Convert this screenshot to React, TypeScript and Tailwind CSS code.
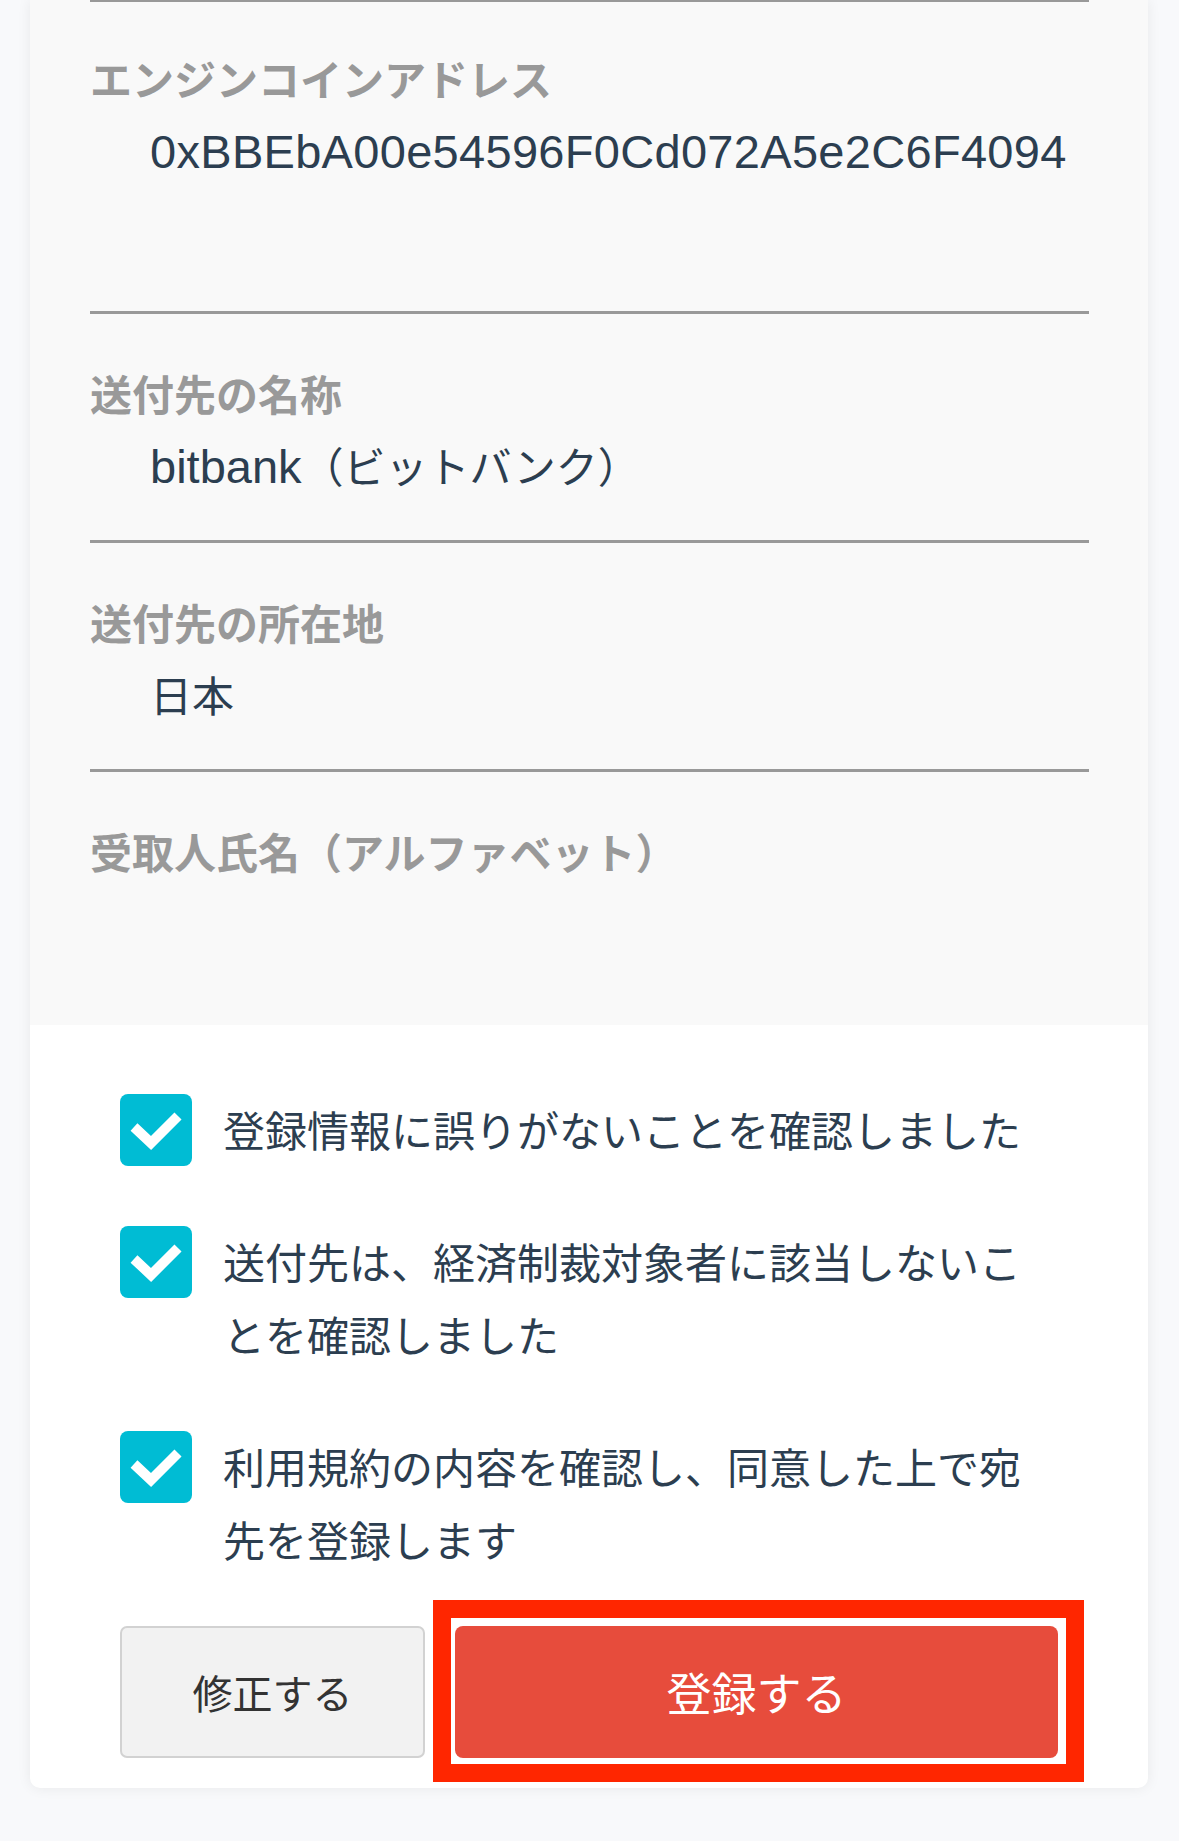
import React from 'react';

interface Field {
  label: string;
  value?: React.ReactNode;
  padTop: string;
  padBottom: string;
}

const fields: Field[] = [
  {
    label: 'エンジンコインアドレス',
    value: (
      <span className="font-['Liberation_Sans',sans-serif] text-[47px] leading-[60px] tracking-[0.3px]">
        0xBBEbA00e54596F0Cd072A5e2C6F4094
      </span>
    ),
    padTop: 'pt-[46px]',
    padBottom: 'pb-[131px]',
  },
  {
    label: '送付先の名称',
    value: (
      <>
        <span className="font-['Liberation_Sans',sans-serif] text-[47px] leading-[60px]">bitbank</span>
        （ビットバンク）
      </>
    ),
    padTop: 'pt-[49px]',
    padBottom: 'pb-[45px]',
  },
  { label: '送付先の所在地', value: '日本', padTop: 'pt-[49px]', padBottom: 'pb-[45px]' },
  { label: '受取人氏名（アルファベット）', padTop: 'pt-[49px]', padBottom: 'pb-[144px]' },
];

const checks = [
  '登録情報に誤りがないことを確認しました',
  '送付先は、経済制裁対象者に該当しないことを確認しました',
  '利用規約の内容を確認し、同意した上で宛先を登録します',
];

function CheckBox() {
  return (
    <div className="w-[72px] h-[72px] shrink-0 rounded-[8px] bg-[#00bcd4]">
      <svg viewBox="0 0 72 72" width="72" height="72">
        <polyline
          points="14,33 31,49 58,22"
          fill="none"
          stroke="#ffffff"
          strokeWidth="10"
          strokeLinejoin="miter"
        />
      </svg>
    </div>
  );
}

export default function App() {
  return (
    <div className="min-h-[1841px] bg-[#f8f9fb] font-['Noto_Sans_CJK_JP',sans-serif]">
      <div className="ml-[30px] w-[1118px] bg-white rounded-b-[10px] shadow-[0_0_14px_rgba(0,0,0,0.07)] overflow-hidden">
        {/* Confirmation details */}
        <div className="bg-[#f9f9f9] pl-[60px] pr-[59px]">
          <div className="h-[2px] bg-[#999999]" />
          {fields.map((f, i) => (
            <div
              key={f.label}
              className={`${f.padTop} ${f.padBottom} ${
                i < fields.length - 1 ? 'border-b-[3px] border-[#999999]' : ''
              }`}
            >
              <div className="h-[60px] text-[42px] leading-[60px] font-bold text-[#999999]">{f.label}</div>
              {f.value && (
                <div className="mt-[12px] h-[60px] pl-[60px] text-[42px] leading-[60px] text-[#2c3e50]">
                  {f.value}
                </div>
              )}
            </div>
          ))}
        </div>

        {/* Agreements */}
        <div className="px-[90px] pt-[69px] pb-[30px]">
          <div className="flex flex-col gap-[59px]">
            {checks.map((c) => (
              <div key={c} className="flex items-start gap-[31px]">
                <CheckBox />
                <p className="flex-1 -mt-[2px] mb-[2px] text-[42px] leading-[73px] text-[#2c3e50]">{c}</p>
              </div>
            ))}
          </div>

          <div className="mt-[49px] flex gap-[30px]">
            <button className="w-[305px] h-[132px] rounded-[7px] border-2 border-[#d2d2d2] bg-[#f2f2f2] text-[40px] text-[#333333]">
              修正する
            </button>
            <div className="relative flex-1">
              <button className="w-full h-[132px] rounded-[8px] bg-[#e74c3c] text-[45px] text-white">登録する</button>
              <div className="absolute -left-[22px] -top-[26px] -right-[26px] -bottom-[24px] border-[18px] border-[#ff2600] pointer-events-none" />
            </div>
          </div>
        </div>
      </div>
    </div>
  );
}
